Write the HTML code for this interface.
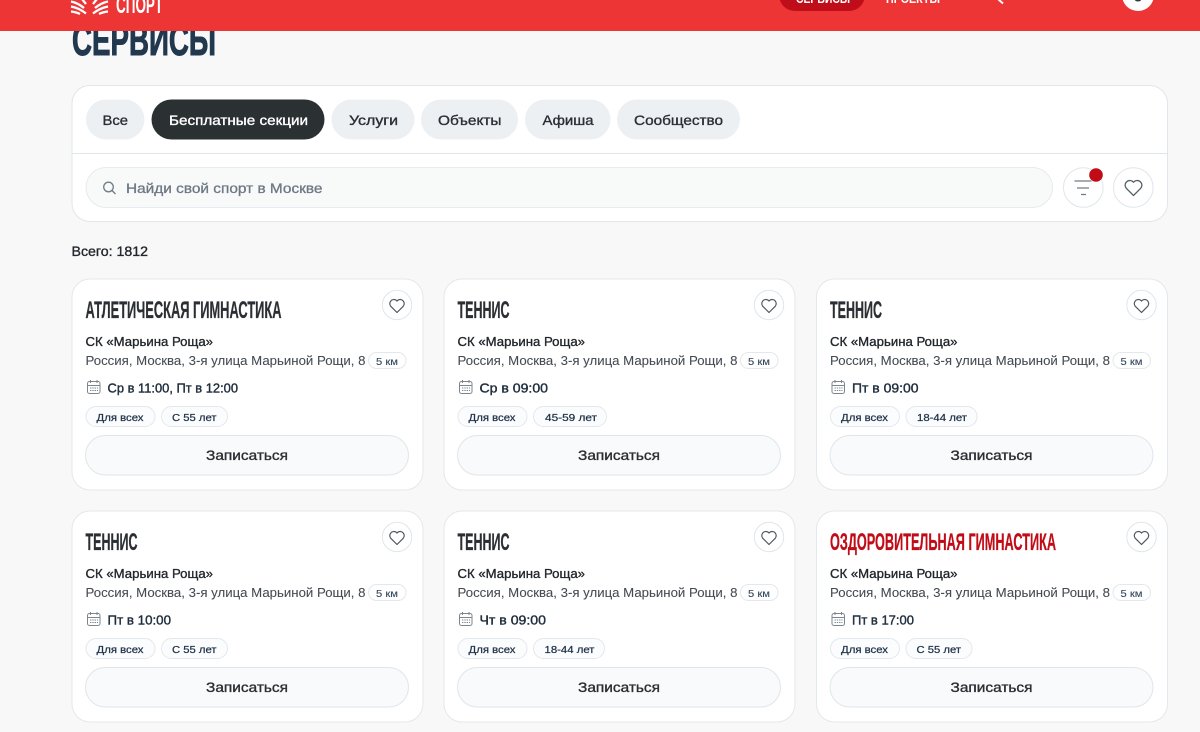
<!DOCTYPE html>
<html lang="ru"><head><meta charset="utf-8"><title>Сервисы</title>
<style>
html,body{margin:0;padding:0;width:1200px;height:732px;overflow:hidden;background:#f8f8f8}
svg{display:block}
text{font-family:"Liberation Sans",sans-serif}
.t{font-size:24px;font-weight:700;fill:#2b2f33;stroke:#2b2f33;stroke-width:.3}
.r{fill:#c10b17;stroke:#c10b17}
.c{font-size:13px;fill:#23272c;stroke:#23272c;stroke-width:.35}
.a{font-size:13px;fill:#454b52;stroke:#454b52;stroke-width:.08}
.km{font-size:10.5px;fill:#33475b;stroke:#33475b;stroke-width:.1}
.s{font-size:13px;fill:#1f2d3d;stroke:#1f2d3d;stroke-width:.4}
.g{font-size:10.5px;fill:#22344a;stroke:#22344a;stroke-width:.25}
.b{font-size:14px;fill:#2b2f33;stroke:#2b2f33;stroke-width:.35}
.tab{font-size:14px;fill:#2b3036;stroke:#2b3036;stroke-width:.35}
</style></head><body>
<svg width="1200" height="732" viewBox="0 0 1200 732" xmlns="http://www.w3.org/2000/svg">
<defs>
<g id="base">
<rect x="72" y="279" width="351" height="211" rx="18" fill="#fff" stroke="#e3e8ec"/>
<circle cx="397" cy="305" r="14.7" fill="#fff" stroke="#dfe6ea"/>
<path d="M397 312.5l-6.2-6.2a4.1 4.1 0 0 1 5.2-6.2l1 .9 1-.9a4.1 4.1 0 0 1 5.2 6.2z" fill="none" stroke="#4f5961" stroke-width="1.2" stroke-linejoin="round"/>
<rect x="368.500" y="352.500" width="37.500" height="16" rx="8" fill="#fff" stroke="#e3e8ec"/>
<g fill="none" stroke="#7d868e" stroke-width="1">
<rect x="87.500" y="381.500" width="12.500" height="12" rx="2"/>
<path d="M87.500 385.500h12.500M90.500 380v3M97 380v3"/>
<path d="M90 388h8M90 390.500h8" stroke-dasharray="1.400 .9"/>
</g>
<rect x="86" y="406.500" width="69" height="20" rx="10" fill="#fbfcfd" stroke="#e3e8ec"/>
<rect x="85.500" y="435.500" width="323" height="39.500" rx="19.700" fill="#f8fafb" stroke="#dfe6ea"/>
</g>
</defs>

<rect width="1200" height="732" fill="#f8f8f8"/>

<!-- heading -->
<text x="72" y="55" font-size="44" font-weight="700" fill="#22384f" stroke="#22384f" stroke-width="1" textLength="144" lengthAdjust="spacingAndGlyphs">СЕРВИСЫ</text>

<!-- header -->
<rect width="1200" height="31" fill="#ee3535"/>
<g fill="none" stroke="#fff" stroke-width="2.300">
<path d="M71 1.500Q78 3 84 8M71 6.500Q79 8 86 13.500M71 11.500Q76 12 80 14"/>
<path d="M108 1.500Q101 3 95 8M108 6.500Q100 8 93 13.500M108 11.500Q103 12 99 14"/>
<path d="M82 -1L86 4M97 -1L93 4"/>
</g>
<text x="116" y="13" font-size="24" font-weight="700" fill="#fff" textLength="47" lengthAdjust="spacingAndGlyphs">СПОРТ</text>
<rect x="779" y="-30" width="86" height="41" rx="16" fill="#c00d1a"/>
<text x="796" y="3" font-size="13" font-weight="700" fill="#fff" textLength="54" lengthAdjust="spacingAndGlyphs">СЕРВИСЫ</text>
<text x="886" y="3" font-size="13" font-weight="700" fill="#fff" textLength="54" lengthAdjust="spacingAndGlyphs">ПРОЕКТЫ</text>
<path d="M998 -1L1003 3.500" stroke="#fff" stroke-width="2" fill="none"/>
<circle cx="1138" cy="-5" r="16" fill="#fff"/>
<ellipse cx="1138" cy="0" rx="3" ry="1.500" fill="#2b3a4a"/>

<!-- filter panel -->
<rect x="72" y="85.500" width="1095.500" height="136" rx="18" fill="#fff" stroke="#e0e6ea"/>
<path d="M72 153.500H1167.500" stroke="#e0e6ea"/>
<rect x="86" y="99.500" width="58.500" height="40" rx="20" fill="#ecf0f3"/>
<rect x="151.500" y="99.500" width="173" height="40" rx="20" fill="#2b3033"/>
<rect x="331.500" y="99.500" width="83" height="40" rx="20" fill="#ecf0f3"/>
<rect x="421" y="99.500" width="97" height="40" rx="20" fill="#ecf0f3"/>
<rect x="525" y="99.500" width="85.500" height="40" rx="20" fill="#ecf0f3"/>
<rect x="617" y="99.500" width="123" height="40" rx="20" fill="#ecf0f3"/>
<text class="tab" x="102.500" y="125" textLength="25.500" lengthAdjust="spacingAndGlyphs">Все</text>
<text class="tab" x="169" y="125" textLength="139" lengthAdjust="spacingAndGlyphs" style="fill:#fff;stroke:#fff">Бесплатные секции</text>
<text class="tab" x="349" y="125" textLength="49" lengthAdjust="spacingAndGlyphs">Услуги</text>
<text class="tab" x="438" y="125" textLength="63.500" lengthAdjust="spacingAndGlyphs">Объекты</text>
<text class="tab" x="542.500" y="125" textLength="51" lengthAdjust="spacingAndGlyphs">Афиша</text>
<text class="tab" x="634" y="125" textLength="89" lengthAdjust="spacingAndGlyphs">Сообщество</text>

<rect x="86" y="167.500" width="966.500" height="40" rx="20" fill="#f8f9f9" stroke="#e6ebee"/>
<circle cx="108.500" cy="187" r="4.800" fill="none" stroke="#717c86" stroke-width="1.300"/>
<path d="M112 190.500l3.500 3.500" stroke="#717c86" stroke-width="1.300" fill="none"/>
<text x="126" y="193" font-size="14" fill="#6d7884" stroke="#6d7884" stroke-width=".3" textLength="196.500" lengthAdjust="spacingAndGlyphs">Найди свой спорт в Москве</text>

<circle cx="1083.300" cy="187.500" r="19.800" fill="#fff" stroke="#dfe6ea"/>
<path d="M1074.500 181h17M1077 188h12M1081 194.500h5" stroke="#6f7a84" stroke-width="1.300" fill="none"/>
<circle cx="1096" cy="175" r="6.800" fill="#c10b17"/>
<circle cx="1133.300" cy="187.500" r="19.800" fill="#fff" stroke="#dfe6ea"/>
<path d="M1133.500 195.500l-7.200-7.200a4.700 4.700 0 0 1 6-7.100l1.200 1 1.200-1a4.700 4.700 0 0 1 6 7.100z" fill="none" stroke="#545f68" stroke-width="1.300" stroke-linejoin="round"/>

<text x="71.500" y="256" font-size="14" fill="#23272c" stroke="#23272c" stroke-width=".35" textLength="76.500" lengthAdjust="spacingAndGlyphs">Всего: 1812</text>

<!-- card 1 -->
<g><use href="#base"/>
<text class="t" x="85.500" y="318" textLength="196" lengthAdjust="spacingAndGlyphs">АТЛЕТИЧЕСКАЯ ГИМНАСТИКА</text>
<text class="c" x="85.500" y="346" textLength="127.500" lengthAdjust="spacingAndGlyphs">СК «Марьина Роща»</text>
<text class="a" x="85.500" y="365" textLength="280" lengthAdjust="spacingAndGlyphs">Россия, Москва, 3-я улица Марьиной Рощи, 8</text>
<text class="km" x="376" y="365" textLength="22" lengthAdjust="spacingAndGlyphs">5 км</text>
<text class="s" x="107.500" y="392.500" textLength="130.500" lengthAdjust="spacingAndGlyphs">Ср в 11:00, Пт в 12:00</text>
<text class="g" x="96.500" y="421" textLength="47" lengthAdjust="spacingAndGlyphs">Для всех</text>
<rect x="161.500" y="406.500" width="66" height="20" rx="10" fill="#fbfcfd" stroke="#e3e8ec"/>
<text class="g" x="172" y="421" textLength="44.500" lengthAdjust="spacingAndGlyphs">С 55 лет</text>
<text class="b" x="206" y="460" textLength="82" lengthAdjust="spacingAndGlyphs">Записаться</text>
</g>

<!-- card 2 -->
<g transform="translate(372 0)"><use href="#base"/>
<text class="t" x="85.500" y="318" textLength="52" lengthAdjust="spacingAndGlyphs">ТЕННИС</text>
<text class="c" x="85.500" y="346" textLength="127.500" lengthAdjust="spacingAndGlyphs">СК «Марьина Роща»</text>
<text class="a" x="85.500" y="365" textLength="280" lengthAdjust="spacingAndGlyphs">Россия, Москва, 3-я улица Марьиной Рощи, 8</text>
<text class="km" x="376" y="365" textLength="22" lengthAdjust="spacingAndGlyphs">5 км</text>
<text class="s" x="107.500" y="392.500" textLength="68.500" lengthAdjust="spacingAndGlyphs">Ср в 09:00</text>
<text class="g" x="96.500" y="421" textLength="47" lengthAdjust="spacingAndGlyphs">Для всех</text>
<rect x="161.500" y="406.500" width="73" height="20" rx="10" fill="#fbfcfd" stroke="#e3e8ec"/>
<text class="g" x="173" y="421" textLength="52" lengthAdjust="spacingAndGlyphs">45-59 лет</text>
<text class="b" x="206" y="460" textLength="82" lengthAdjust="spacingAndGlyphs">Записаться</text>
</g>

<!-- card 3 -->
<g transform="translate(744.500 0)"><use href="#base"/>
<text class="t" x="85.500" y="318" textLength="52" lengthAdjust="spacingAndGlyphs">ТЕННИС</text>
<text class="c" x="85.500" y="346" textLength="127.500" lengthAdjust="spacingAndGlyphs">СК «Марьина Роща»</text>
<text class="a" x="85.500" y="365" textLength="280" lengthAdjust="spacingAndGlyphs">Россия, Москва, 3-я улица Марьиной Рощи, 8</text>
<text class="km" x="376" y="365" textLength="22" lengthAdjust="spacingAndGlyphs">5 км</text>
<text class="s" x="107.500" y="392.500" textLength="66.500" lengthAdjust="spacingAndGlyphs">Пт в 09:00</text>
<text class="g" x="96.500" y="421" textLength="47" lengthAdjust="spacingAndGlyphs">Для всех</text>
<rect x="161.500" y="406.500" width="71" height="20" rx="10" fill="#fbfcfd" stroke="#e3e8ec"/>
<text class="g" x="172.500" y="421" textLength="50" lengthAdjust="spacingAndGlyphs">18-44 лет</text>
<text class="b" x="206" y="460" textLength="82" lengthAdjust="spacingAndGlyphs">Записаться</text>
</g>

<!-- card 4 -->
<g transform="translate(0 232)"><use href="#base"/>
<text class="t" x="85.500" y="318" textLength="52" lengthAdjust="spacingAndGlyphs">ТЕННИС</text>
<text class="c" x="85.500" y="346" textLength="127.500" lengthAdjust="spacingAndGlyphs">СК «Марьина Роща»</text>
<text class="a" x="85.500" y="365" textLength="280" lengthAdjust="spacingAndGlyphs">Россия, Москва, 3-я улица Марьиной Рощи, 8</text>
<text class="km" x="376" y="365" textLength="22" lengthAdjust="spacingAndGlyphs">5 км</text>
<text class="s" x="107.500" y="392.500" textLength="63.500" lengthAdjust="spacingAndGlyphs">Пт в 10:00</text>
<text class="g" x="96.500" y="421" textLength="47" lengthAdjust="spacingAndGlyphs">Для всех</text>
<rect x="161.500" y="406.500" width="66" height="20" rx="10" fill="#fbfcfd" stroke="#e3e8ec"/>
<text class="g" x="172" y="421" textLength="44.500" lengthAdjust="spacingAndGlyphs">С 55 лет</text>
<text class="b" x="206" y="460" textLength="82" lengthAdjust="spacingAndGlyphs">Записаться</text>
</g>

<!-- card 5 -->
<g transform="translate(372 232)"><use href="#base"/>
<text class="t" x="85.500" y="318" textLength="52" lengthAdjust="spacingAndGlyphs">ТЕННИС</text>
<text class="c" x="85.500" y="346" textLength="127.500" lengthAdjust="spacingAndGlyphs">СК «Марьина Роща»</text>
<text class="a" x="85.500" y="365" textLength="280" lengthAdjust="spacingAndGlyphs">Россия, Москва, 3-я улица Марьиной Рощи, 8</text>
<text class="km" x="376" y="365" textLength="22" lengthAdjust="spacingAndGlyphs">5 км</text>
<text class="s" x="107.500" y="392.500" textLength="66.500" lengthAdjust="spacingAndGlyphs">Чт в 09:00</text>
<text class="g" x="96.500" y="421" textLength="47" lengthAdjust="spacingAndGlyphs">Для всех</text>
<rect x="161.500" y="406.500" width="71" height="20" rx="10" fill="#fbfcfd" stroke="#e3e8ec"/>
<text class="g" x="172.500" y="421" textLength="50" lengthAdjust="spacingAndGlyphs">18-44 лет</text>
<text class="b" x="206" y="460" textLength="82" lengthAdjust="spacingAndGlyphs">Записаться</text>
</g>

<!-- card 6 -->
<g transform="translate(744.500 232)"><use href="#base"/>
<text class="t r" x="85.500" y="318" textLength="226" lengthAdjust="spacingAndGlyphs">ОЗДОРОВИТЕЛЬНАЯ ГИМНАСТИКА</text>
<text class="c" x="85.500" y="346" textLength="127.500" lengthAdjust="spacingAndGlyphs">СК «Марьина Роща»</text>
<text class="a" x="85.500" y="365" textLength="280" lengthAdjust="spacingAndGlyphs">Россия, Москва, 3-я улица Марьиной Рощи, 8</text>
<text class="km" x="376" y="365" textLength="22" lengthAdjust="spacingAndGlyphs">5 км</text>
<text class="s" x="107.500" y="392.500" textLength="62" lengthAdjust="spacingAndGlyphs">Пт в 17:00</text>
<text class="g" x="96.500" y="421" textLength="47" lengthAdjust="spacingAndGlyphs">Для всех</text>
<rect x="161.500" y="406.500" width="66" height="20" rx="10" fill="#fbfcfd" stroke="#e3e8ec"/>
<text class="g" x="172" y="421" textLength="44.500" lengthAdjust="spacingAndGlyphs">С 55 лет</text>
<text class="b" x="206" y="460" textLength="82" lengthAdjust="spacingAndGlyphs">Записаться</text>
</g>
</svg>
</body></html>
